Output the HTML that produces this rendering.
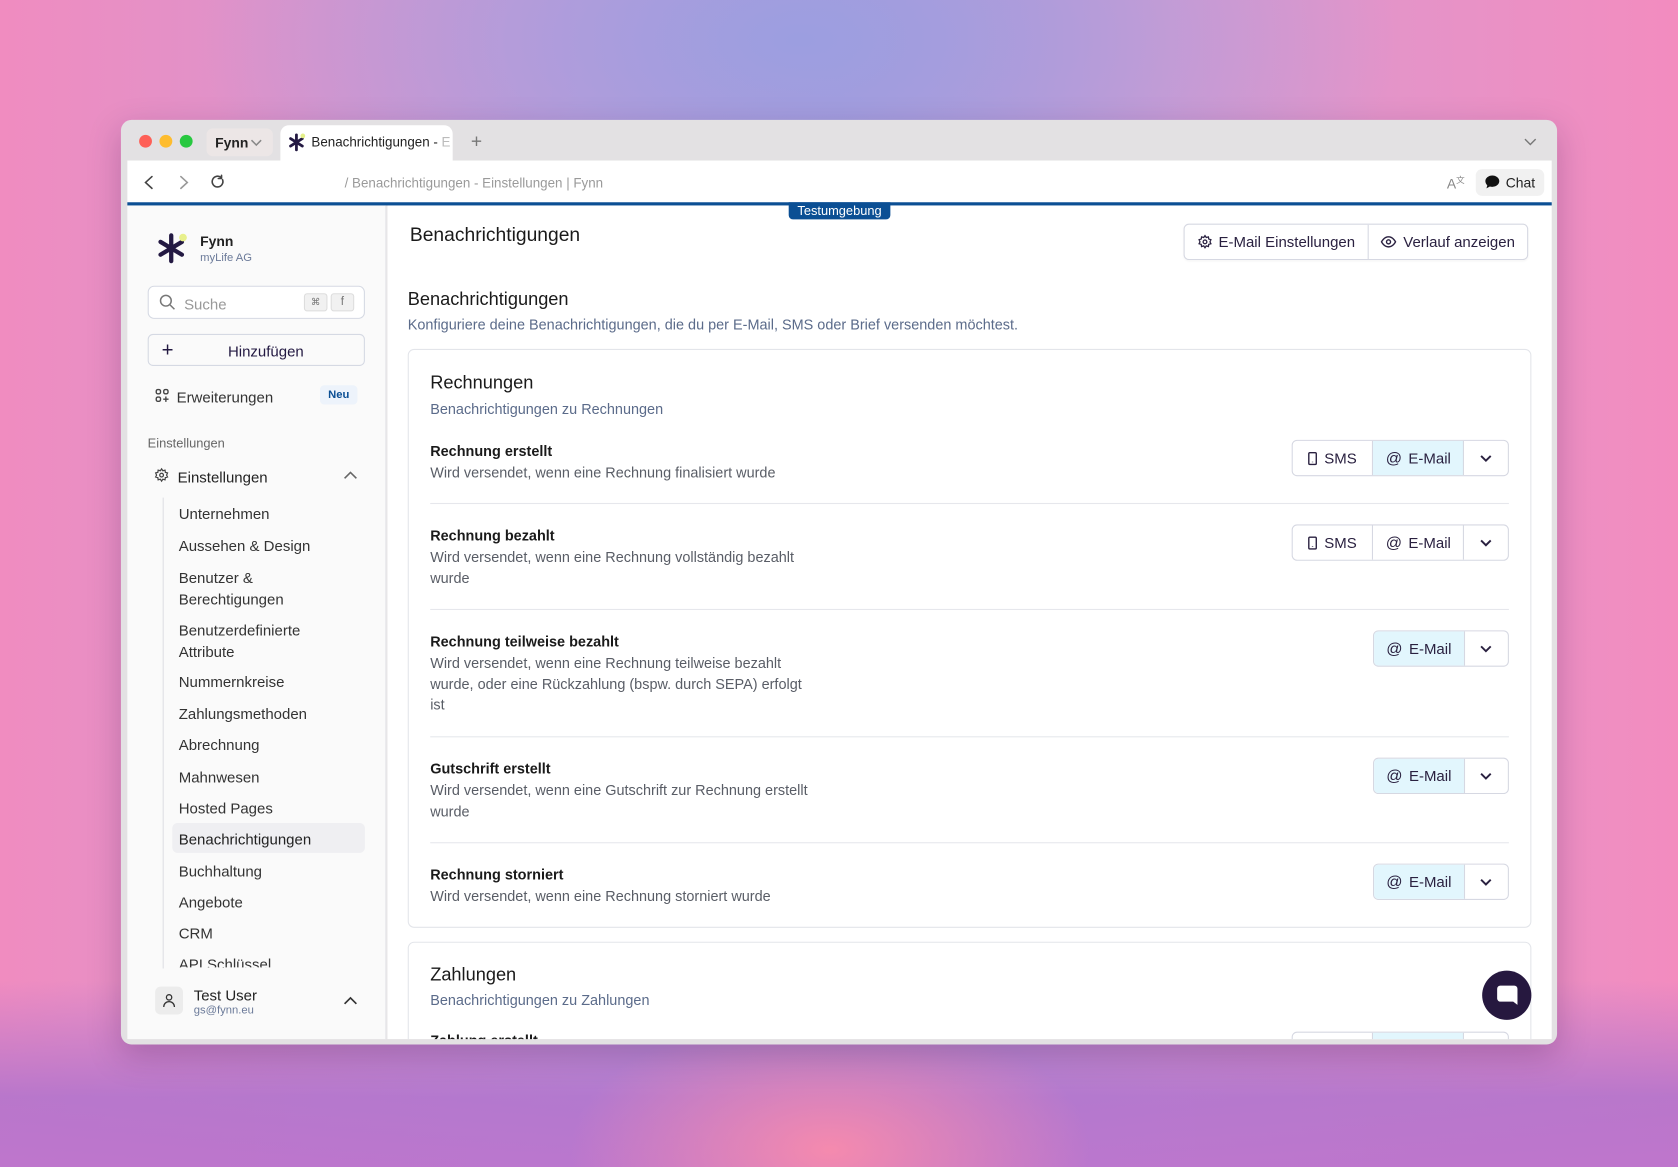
<!DOCTYPE html>
<html><head><meta charset="utf-8"><style>
*{box-sizing:border-box;margin:0;padding:0}
html,body{width:1678px;height:1167px;overflow:hidden}
body{font-family:"Liberation Sans",sans-serif;background:
radial-gradient(ellipse 260px 140px at 830px 1150px,#f58aae 0%,rgba(245,138,174,0) 100%),
linear-gradient(180deg,rgba(170,110,200,0) 0%,rgba(170,110,200,0) 84%,rgba(175,115,205,.85) 94%,rgba(185,115,205,.9) 100%),
radial-gradient(ellipse 600px 300px at 800px 40px,#9c9ee0 0%,rgba(156,158,224,0) 100%),
linear-gradient(90deg,#f08cc0 0%,#c99bd6 35%,#b39ad9 50%,#d99ad0 70%,#f38cbf 100%);}
#s{position:absolute;left:0;top:0;width:1568px;height:1090px;transform:scale(1.07015);transform-origin:0 0}
.a{position:absolute;white-space:nowrap}
.win{position:absolute;left:113px;top:112px;width:1342px;height:864px;background:#e3e1e3;border-radius:10px;box-shadow:0 10px 30px rgba(60,20,80,.25);overflow:hidden}
.dot{position:absolute;top:126px;width:12px;height:12px;border-radius:50%}
.side{position:absolute;left:119px;top:192px;width:242px;height:779px;background:#fafafa;border-right:1px solid #e6e6ea;overflow:hidden}
.main{position:absolute;left:362px;top:192px;width:1088px;height:779px;background:#fff;overflow:hidden}
.si{position:absolute;left:48px;font-size:14px;color:#333}
.t{font-size:13.5px;color:#1a1a1a;font-weight:bold}
.d{font-size:13.5px;color:#595d66;line-height:19.5px}
.bg{position:absolute;height:34px;border:1px solid #d6d8e2;border-radius:5px;display:flex;overflow:hidden;background:#fff}
.bg div{display:flex;align-items:center;justify-content:center;font-size:14px;color:#2a2140;border-right:1px solid #d6d8e2;gap:6px}
.bg div:last-child{border-right:none}
.hl{background:#e2f6fd}
.hr{position:absolute;left:40px;width:1008px;height:1px;background:#e6e7ec}
</style></head><body><div id="s">
<div class="win"></div>
<div class="dot" style="left:130px;background:#fe5f57"></div>
<div class="dot" style="left:149px;background:#febc2e"></div>
<div class="dot" style="left:168px;background:#28c840"></div>
<div class="a" style="left:193px;top:120px;width:62px;height:26px;background:#ece6e6;border-radius:6px;font-size:13px;font-weight:bold;color:#222;padding:6px 0 0 8px">Fynn</div>
<svg class="a" style="left:234px;top:130px" width="11" height="7" viewBox="0 0 11 7" fill="none" stroke="#888" stroke-width="1.4"><path d="M1 1l4.5 4.5L10 1"/></svg>
<div class="a" style="left:262px;top:117px;width:161px;height:34px;background:#fff;border-radius:8px 8px 0 0"></div>
<svg class="a" style="left:269px;top:124px" width="18" height="18" viewBox="0 0 18 18"><g stroke="#231942" stroke-width="2.6" stroke-linecap="round"><path d="M8 2v14M2.5 5.5l11 7M13.5 5.5l-11 7"/></g><circle cx="14" cy="3" r="2.2" fill="#e5f08a"/></svg>
<div class="a" style="left:291px;top:126px;font-size:12.5px;color:#222">Benachrichtigungen - <span style="color:#bbb">E</span></div>
<div class="a" style="left:440px;top:122px;font-size:18px;color:#777">+</div>
<svg class="a" style="left:1424px;top:129px" width="12" height="7" viewBox="0 0 12 7" fill="none" stroke="#777" stroke-width="1.3"><path d="M1 1l5 5 5-5"/></svg>
<div class="a" style="left:119px;top:150px;width:1331px;height:40px;background:#fff"></div>
<svg class="a" style="left:132px;top:163px" width="80" height="15" viewBox="0 0 80 15" fill="none" stroke="#444" stroke-width="1.5" stroke-linecap="round"><path d="M10 2L4 7.5 10 13"/><path d="M37 2l6 5.5-6 5.5" stroke="#999"/><path d="M76 5a5 5 0 1 1-2-2.5M75 0.8v3h-3"/></svg>
<div class="a" style="left:322px;top:164px;font-size:12.5px;color:#9a9a9a">/ Benachrichtigungen - Einstellungen | Fynn</div>
<div class="a" style="left:1352px;top:163px;font-size:13px;color:#888">A<sup style="font-size:8px">文</sup></div>
<div class="a" style="left:1379px;top:158px;width:64px;height:25px;background:#f1f1f1;border-radius:6px;font-size:13px;color:#222;padding:5px 0 0 28px">Chat</div>
<svg class="a" style="left:1387px;top:163px" width="15" height="14" viewBox="0 0 15 14"><path d="M7.5 1C11 1 14 3.3 14 6.3S11 11.6 7.5 11.6c-.8 0-1.6-.1-2.3-.3L2 13l.8-2.8C1.7 9.2 1 7.8 1 6.3 1 3.3 4 1 7.5 1z" fill="#111"/></svg>
<div class="a" style="left:119px;top:189px;width:1331px;height:3px;background:#0b4f94"></div>

<div class="side">
<svg class="a" style="left:28px;top:25px" width="30" height="30" viewBox="0 0 30 30"><g stroke="#231942" stroke-width="4" stroke-linecap="round"><path d="M13 3v24M3 9l20 12M23 9L3 21"/></g><circle cx="24" cy="5" r="3.6" fill="#e8f08c"/></svg>
<div class="a" style="left:68px;top:26px;font-size:13px;color:#222;font-weight:bold">Fynn</div>
<div class="a" style="left:68px;top:43px;font-size:10.5px;color:#6b7a99">myLife AG</div>
<div class="a" style="left:19px;top:75px;width:203px;height:31px;border:1px solid #d5d9e3;border-radius:6px;background:#fff"></div>
<svg class="a" style="left:30px;top:83px" width="15" height="15" viewBox="0 0 15 15" fill="none" stroke="#777" stroke-width="1.4"><circle cx="6" cy="6" r="5"/><path d="M10 10l4 4"/></svg>
<div class="a" style="left:53px;top:84px;font-size:14px;color:#999">Suche</div>
<div class="a" style="left:165px;top:82px;width:22px;height:17px;border:1px solid #ddd;background:#f1f1f1;border-radius:3px;font-size:9px;color:#777;text-align:center;line-height:15px">⌘</div>
<div class="a" style="left:190px;top:82px;width:22px;height:17px;border:1px solid #ddd;background:#f1f1f1;border-radius:3px;font-size:11px;color:#777;text-align:center;line-height:15px">f</div>
<div class="a" style="left:19px;top:120px;width:203px;height:30px;border:1px solid #d5d9e3;border-radius:5px;background:#fafafa"></div>
<div class="a" style="left:32px;top:125px;font-size:19px;color:#231942">+</div>
<div class="a" style="left:94px;top:128px;font-size:14px;color:#231942">Hinzufügen</div>
<svg class="a" style="left:26px;top:171px" width="13" height="13" viewBox="0 0 13 13" fill="none" stroke="#444" stroke-width="1.3"><rect x="1" y="1" width="4" height="4" rx="1.5"/><rect x="8" y="1" width="4" height="4" rx="1.5"/><rect x="1" y="8" width="4" height="4" rx="1.5"/><path d="M10 7.5v5M7.5 10h5"/></svg>
<div class="a" style="left:46px;top:171px;font-size:14px;color:#333">Erweiterungen</div>
<div class="a" style="left:180px;top:168px;width:35px;height:18px;background:#edf3fb;border-radius:4px;font-size:10.5px;color:#0b4f94;font-weight:bold;text-align:center;line-height:18px">Neu</div>
<div class="a" style="left:19px;top:215px;font-size:12px;color:#666">Einstellungen</div>
<svg class="a" style="left:25px;top:245px" width="14" height="14" viewBox="0 0 24 24" fill="none" stroke="#444" stroke-width="2"><circle cx="12" cy="12" r="3"/><path d="M12 2l2 3 3.5-1 .5 3.5 3.5 1-1.5 3.5 1.5 3-3.5 1-.5 3.5-3.5-1-2 3-2-3-3.5 1-.5-3.5-3.5-1 1.5-3-1.5-3.5 3.5-1L6.5 4 10 5z"/></svg>
<div class="a" style="left:47px;top:246px;font-size:14px;color:#222">Einstellungen</div>
<svg class="a" style="left:202px;top:248px" width="13" height="8" viewBox="0 0 13 8" fill="none" stroke="#666" stroke-width="1.5"><path d="M1 7l5.5-5.5L12 7"/></svg>
<div class="a" style="left:33px;top:273px;width:1px;height:440px;background:#dedfe4"></div>
<div class="si" style="top:280px">Unternehmen</div>
<div class="si" style="top:310px">Aussehen &amp; Design</div>
<div class="si" style="top:338px;line-height:20px">Benutzer &amp;<br>Berechtigungen</div>
<div class="si" style="top:387px;line-height:20px">Benutzerdefinierte<br>Attribute</div>
<div class="si" style="top:437px">Nummernkreise</div>
<div class="si" style="top:467px">Zahlungsmethoden</div>
<div class="si" style="top:496px">Abrechnung</div>
<div class="si" style="top:526px">Mahnwesen</div>
<div class="si" style="top:555px">Hosted Pages</div>
<div class="a" style="left:42px;top:577px;width:180px;height:28px;background:#efeff2;border-radius:5px"></div>
<div class="si" style="top:584px;color:#222;font-weight:bold;font-weight:500">Benachrichtigungen</div>
<div class="si" style="top:614px">Buchhaltung</div>
<div class="si" style="top:643px">Angebote</div>
<div class="si" style="top:672px">CRM</div>
<div class="a" style="left:48px;top:701px;height:11px;overflow:hidden;font-size:14px;color:#333">API Schlüssel</div>
<div class="a" style="left:26px;top:730px;width:26px;height:26px;background:#ececec;border-radius:5px"></div>
<svg class="a" style="left:32px;top:736px" width="14" height="14" viewBox="0 0 14 14" fill="none" stroke="#333" stroke-width="1.2"><circle cx="7" cy="4" r="2.5"/><path d="M2 13c0-3 2.2-5 5-5s5 2 5 5"/></svg>
<div class="a" style="left:62px;top:730px;font-size:14px;color:#222">Test User</div>
<div class="a" style="left:62px;top:746px;font-size:10.5px;color:#6b7a99">gs@fynn.eu</div>
<svg class="a" style="left:202px;top:739px" width="13" height="8" viewBox="0 0 13 8" fill="none" stroke="#333" stroke-width="1.6"><path d="M1 7l5.5-5.5L12 7"/></svg>
</div>

<div class="main">
<div class="a" style="left:21px;top:17px;font-size:18px;color:#1a1a1a">Benachrichtigungen</div>
<div class="bg" style="left:744px;top:17px;width:322px;height:34px;box-shadow:0 1px 2px rgba(0,0,0,.04)">
<div style="width:173px"><svg width="14" height="14" viewBox="0 0 24 24" fill="none" stroke="#2a2140" stroke-width="2"><circle cx="12" cy="12" r="3"/><path d="M12 2l2 3 3.5-1 .5 3.5 3.5 1-1.5 3.5 1.5 3-3.5 1-.5 3.5-3.5-1-2 3-2-3-3.5 1-.5-3.5-3.5-1 1.5-3-1.5-3.5 3.5-1L6.5 4 10 5z"/></svg>E-Mail Einstellungen</div>
<div style="width:149px"><svg width="15" height="12" viewBox="0 0 16 12" fill="none" stroke="#2a2140" stroke-width="1.4"><path d="M1 6s2.5-5 7-5 7 5 7 5-2.5 5-7 5-7-5-7-5z"/><circle cx="8" cy="6" r="2"/></svg>Verlauf anzeigen</div>
</div>
<div class="a" style="left:19px;top:78px;font-size:17px;color:#1a1a1a">Benachrichtigungen</div>
<div class="a" style="left:19px;top:104px;font-size:13.5px;color:#5b6b8a">Konfiguriere deine Benachrichtigungen, die du per E-Mail, SMS oder Brief versenden möchtest.</div>

<div class="a" style="left:19px;top:134px;width:1050px;height:541px;border:1px solid #e3e5ea;border-radius:6px"></div>
<div class="a" style="left:40px;top:156px;font-size:17px;color:#1a1a1a">Rechnungen</div>
<div class="a" style="left:40px;top:183px;font-size:13.5px;color:#5b6b8a">Benachrichtigungen zu Rechnungen</div>

<div class="a t" style="left:40px;top:222px">Rechnung erstellt</div>
<div class="a d" style="left:40px;top:240px">Wird versendet, wenn eine Rechnung finalisiert wurde</div>
<div class="bg" style="left:845px;top:219px;width:203px"><div style="width:76px"><svg width="9" height="13" viewBox="0 0 9 13" fill="none" stroke="#2a2140" stroke-width="1.3"><rect x="1" y="1" width="7" height="11" rx="1"/><path d="M4.5 9.5v.5"/></svg>SMS</div><div class="hl" style="width:86px"><span style="font-size:15px">@</span>E-Mail</div><div style="width:41px"><svg width="11" height="7" viewBox="0 0 11 7" fill="none" stroke="#2a2140" stroke-width="1.8"><path d="M1 1l4.5 4.5L10 1"/></svg></div></div>
<div class="hr" style="top:278px"></div>

<div class="a t" style="left:40px;top:301px">Rechnung bezahlt</div>
<div class="a d" style="left:40px;top:319px">Wird versendet, wenn eine Rechnung vollständig bezahlt<br>wurde</div>
<div class="bg" style="left:845px;top:298px;width:203px"><div style="width:76px"><svg width="9" height="13" viewBox="0 0 9 13" fill="none" stroke="#2a2140" stroke-width="1.3"><rect x="1" y="1" width="7" height="11" rx="1"/><path d="M4.5 9.5v.5"/></svg>SMS</div><div style="width:86px"><span style="font-size:15px">@</span>E-Mail</div><div style="width:41px"><svg width="11" height="7" viewBox="0 0 11 7" fill="none" stroke="#2a2140" stroke-width="1.8"><path d="M1 1l4.5 4.5L10 1"/></svg></div></div>
<div class="hr" style="top:377px"></div>

<div class="a t" style="left:40px;top:400px">Rechnung teilweise bezahlt</div>
<div class="a d" style="left:40px;top:418px">Wird versendet, wenn eine Rechnung teilweise bezahlt<br>wurde, oder eine Rückzahlung (bspw. durch SEPA) erfolgt<br>ist</div>
<div class="bg" style="left:921px;top:397px;width:127px"><div class="hl" style="width:86px"><span style="font-size:15px">@</span>E-Mail</div><div style="width:41px"><svg width="11" height="7" viewBox="0 0 11 7" fill="none" stroke="#2a2140" stroke-width="1.8"><path d="M1 1l4.5 4.5L10 1"/></svg></div></div>
<div class="hr" style="top:496px"></div>

<div class="a t" style="left:40px;top:519px">Gutschrift erstellt</div>
<div class="a d" style="left:40px;top:537px">Wird versendet, wenn eine Gutschrift zur Rechnung erstellt<br>wurde</div>
<div class="bg" style="left:921px;top:516px;width:127px"><div class="hl" style="width:86px"><span style="font-size:15px">@</span>E-Mail</div><div style="width:41px"><svg width="11" height="7" viewBox="0 0 11 7" fill="none" stroke="#2a2140" stroke-width="1.8"><path d="M1 1l4.5 4.5L10 1"/></svg></div></div>
<div class="hr" style="top:595px"></div>

<div class="a t" style="left:40px;top:618px">Rechnung storniert</div>
<div class="a d" style="left:40px;top:636px">Wird versendet, wenn eine Rechnung storniert wurde</div>
<div class="bg" style="left:921px;top:615px;width:127px"><div class="hl" style="width:86px"><span style="font-size:15px">@</span>E-Mail</div><div style="width:41px"><svg width="11" height="7" viewBox="0 0 11 7" fill="none" stroke="#2a2140" stroke-width="1.8"><path d="M1 1l4.5 4.5L10 1"/></svg></div></div>

<div class="a" style="left:19px;top:688px;width:1050px;height:200px;border:1px solid #e3e5ea;border-radius:6px"></div>
<div class="a" style="left:40px;top:709px;font-size:17px;color:#1a1a1a">Zahlungen</div>
<div class="a" style="left:40px;top:735px;font-size:13.5px;color:#5b6b8a">Benachrichtigungen zu Zahlungen</div>
<div class="a t" style="left:40px;top:773px">Zahlung erstellt</div>
<div class="bg" style="left:845px;top:772px;width:203px"><div style="width:76px"></div><div class="hl" style="width:86px"></div><div style="width:41px"></div></div>
</div>

<div class="a" style="left:737px;top:189px;width:95px;height:16px;background:#0b4f94;border-radius:0 0 4px 4px;color:#fff;font-size:12px;text-align:center;line-height:16px">Testumgebung</div>
<div class="a" style="left:1385px;top:907px;width:46px;height:46px;border-radius:50%;background:#26183f"></div>
<svg class="a" style="left:1398px;top:920px" width="21" height="21" viewBox="0 0 21 21"><path d="M4 1h13a3 3 0 0 1 3 3v15l-4-3H4a3 3 0 0 1-3-3V4a3 3 0 0 1 3-3z" fill="#fff"/></svg>
</div></body></html>
